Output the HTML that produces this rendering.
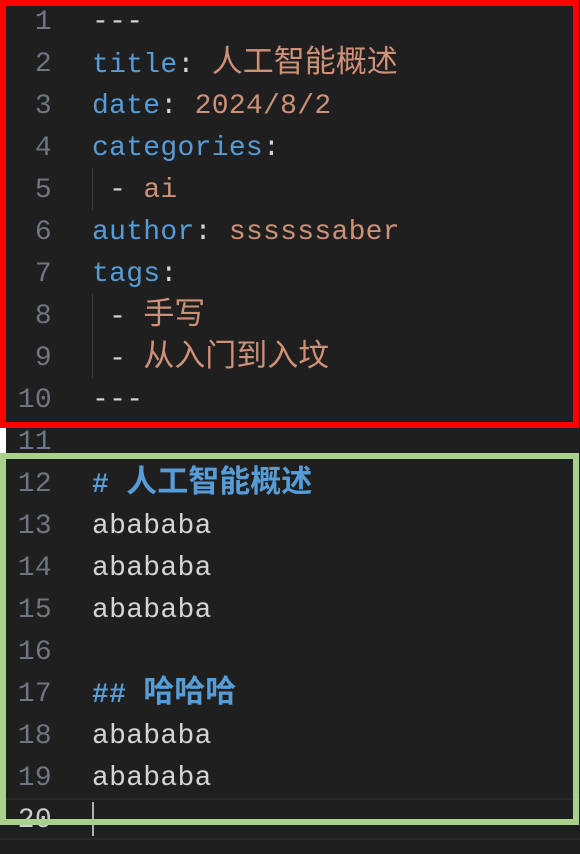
<!DOCTYPE html>
<html><head><meta charset="utf-8"><style>
html,body{margin:0;padding:0;background:#1f1f1f;width:580px;height:854px;overflow:hidden;position:relative}
.l{position:absolute;left:0;height:42px;line-height:46px;font-family:"Liberation Mono","Noto Sans CJK SC",monospace;font-size:28px;letter-spacing:0.3px;white-space:pre;color:#d4d4d4}
.n{position:absolute;left:0;width:52px;text-align:right;color:#6e7681}
.c{position:absolute;left:92px}
.k{color:#569cd6}.v{color:#ce9178}.h{color:#569cd6;font-weight:bold}
.z{font-size:31px;letter-spacing:0}
.g{position:absolute;left:92px;width:1px;background:#404040}
</style></head><body>
<div style="position:absolute;left:0;top:428px;width:6px;height:25px;background:#fff"></div>
<div style="position:absolute;left:0;top:798px;width:580px;height:42px;box-sizing:border-box;border-top:2px solid #282828;border-bottom:2px solid #282828"></div>
<div class="g" style="top:168px;height:42px"></div>
<div class="g" style="top:294px;height:84px"></div>
<div class="l" style="top:0"><span class="n">1</span><span class="c">---</span></div>
<div class="l" style="top:42px"><span class="n">2</span><span class="c"><span class="k">title</span>: <span class="v z">人工智能概述</span></span></div>
<div class="l" style="top:84px"><span class="n">3</span><span class="c"><span class="k">date</span>: <span class="v">2024/8/2</span></span></div>
<div class="l" style="top:126px"><span class="n">4</span><span class="c"><span class="k">categories</span>:</span></div>
<div class="l" style="top:168px"><span class="n">5</span><span class="c"> - <span class="v">ai</span></span></div>
<div class="l" style="top:210px"><span class="n">6</span><span class="c"><span class="k">author</span>: <span class="v">ssssssaber</span></span></div>
<div class="l" style="top:252px"><span class="n">7</span><span class="c"><span class="k">tags</span>:</span></div>
<div class="l" style="top:294px"><span class="n">8</span><span class="c"> - <span class="v z">手写</span></span></div>
<div class="l" style="top:336px"><span class="n">9</span><span class="c"> - <span class="v z">从入门到入坟</span></span></div>
<div class="l" style="top:378px"><span class="n">10</span><span class="c">---</span></div>
<div class="l" style="top:420px"><span class="n">11</span></div>
<div class="l" style="top:462px"><span class="n">12</span><span class="c h"># <span class="z">人工智能概述</span></span></div>
<div class="l" style="top:504px"><span class="n">13</span><span class="c">abababa</span></div>
<div class="l" style="top:546px"><span class="n">14</span><span class="c">abababa</span></div>
<div class="l" style="top:588px"><span class="n">15</span><span class="c">abababa</span></div>
<div class="l" style="top:630px"><span class="n">16</span></div>
<div class="l" style="top:672px"><span class="n">17</span><span class="c h">## <span class="z">哈哈哈</span></span></div>
<div class="l" style="top:714px"><span class="n">18</span><span class="c">abababa</span></div>
<div class="l" style="top:756px"><span class="n">19</span><span class="c">abababa</span></div>
<div class="l" style="top:798px"><span class="n" style="color:#cccccc">20</span></div>
<div style="position:absolute;left:92px;top:802px;width:2px;height:34px;background:#aeafad"></div>
<div style="position:absolute;left:0;top:0;width:579px;height:428px;box-sizing:border-box;border:6px solid #ff0000"></div>
<div style="position:absolute;left:0;top:453px;width:579px;height:372px;box-sizing:border-box;border:6px solid #a9d18e"></div>
</body></html>
